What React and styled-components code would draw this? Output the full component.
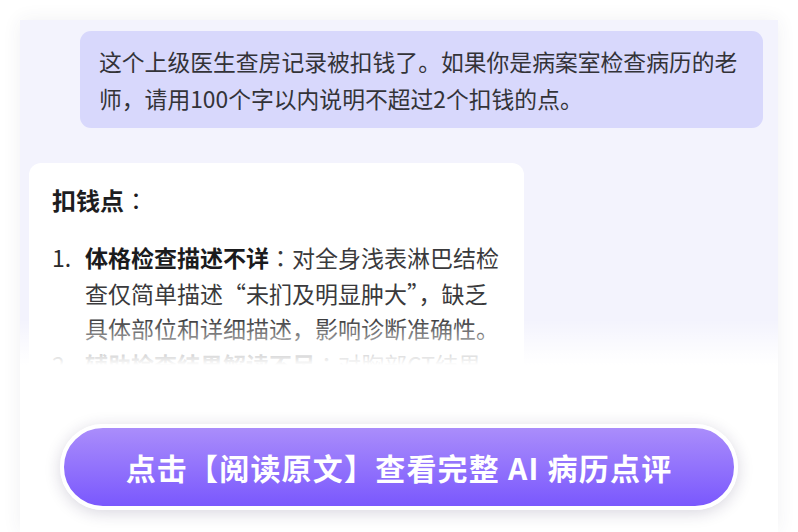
import React from "react";
import styled, { createGlobalStyle } from "styled-components";

const Global = createGlobalStyle`
  html, body { margin: 0; padding: 0; background: #ffffff; }
  body { font-family: "Noto Sans CJK SC", "Noto Sans", sans-serif; }
  * { box-sizing: border-box; }
`;

const Page = styled.div`
  width: 798px;
  height: 532px;
  padding: 20px 20px 0;
  overflow: hidden;
  background: #ffffff;
`;

const Panel = styled.div`
  width: 758px;
  height: 512px;
  display: flex;
  flex-direction: column;
  background: #ffffff;
  box-shadow: 0 0 18px rgba(60, 60, 90, 0.07);
`;

const ChatArea = styled.div`
  position: relative;
  height: 345px;
  overflow: hidden;
  background: #f3f3fd;
  padding: 11px 15px 0 9px;
  display: flex;
  flex-direction: column;
  gap: 35px;

  &::after {
    content: "";
    position: absolute;
    left: 0;
    right: 0;
    bottom: 0;
    height: 46px;
    background: linear-gradient(
      to bottom,
      rgba(255, 255, 255, 0),
      rgba(255, 255, 255, 0.8) 75%,
      #ffffff
    );
  }
`;

const UserBubble = styled.div`
  align-self: flex-end;
  width: 683px;
  background: #d8d8fc;
  border-radius: 11px;
  padding: 12px 0 11px 19px;
  font-size: 22.8px;
  line-height: 37px;
  color: #333338;
`;

const AnswerCard = styled.div`
  width: 495px;
  background: #ffffff;
  border-radius: 12px;
  padding: 19px 23px 20px;
  color: #333333;
`;

const Title = styled.div`
  font-size: 24px;
  font-weight: 700;
  line-height: 36px;
  color: #1d1d1f;
  margin-bottom: 22px;
`;

const Colon = styled.span`
  font-family: "Noto Sans CJK TC", "Noto Sans CJK SC", sans-serif;
  font-weight: 400;
`;

const List = styled.ol`
  margin: 0;
  padding: 0;
  list-style: none;
  display: flex;
  flex-direction: column;
`;

const Item = styled.li`
  display: flex;
  font-size: 23px;
  line-height: 35.5px;
  color: #3a3a3c;
`;

const Num = styled.span`
  flex: 0 0 33px;
  color: #2a2a2c;
`;

const ItemText = styled.span`
  flex: 1;
`;

const Strong = styled.b`
  font-weight: 700;
  color: #1b1b1d;
`;

const Footer = styled.div`
  flex: 1;
  background: #ffffff;
  display: flex;
  justify-content: center;
  padding-top: 59px;
`;

const CTA = styled.button`
  width: 678px;
  height: 86px;
  border: 4px solid #ffffff;
  border-radius: 43px;
  background: linear-gradient(to bottom, #aa8dfb, #7a58fd);
  box-shadow: 0 3px 16px rgba(40, 30, 80, 0.18);
  color: #ffffff;
  font-family: "Noto Sans CJK SC", "Noto Sans", sans-serif;
  font-size: 30px;
  font-weight: 700;
  letter-spacing: 1.2px;
  display: flex;
  align-items: center;
  justify-content: center;
  padding: 0;
  cursor: pointer;
`;

export default function App() {
  return (
    <>
      <Global />
      <Page>
        <Panel>
          <ChatArea>
            <UserBubble>
              这个上级医生查房记录被扣钱了。如果你是病案室检查病历的老师，请用100个字以内说明不超过2个扣钱的点。
            </UserBubble>
            <AnswerCard>
              <Title>
                扣钱点<Colon>：</Colon>
              </Title>
              <List>
                <Item>
                  <Num>1.</Num>
                  <ItemText>
                    <Strong>体格检查描述不详</Strong>
                    <Colon>：</Colon>对全身浅表淋巴结检查仅简单描述“未扪及明显肿大”，缺乏具体部位和详细描述，影响诊断准确性。
                  </ItemText>
                </Item>
                <Item>
                  <Num>2.</Num>
                  <ItemText>
                    <Strong>辅助检查结果解读不足</Strong>
                    <Colon>：</Colon>对胸部CT结果的分析不够深入，未结合临床给出进一步处理意见。
                  </ItemText>
                </Item>
              </List>
            </AnswerCard>
          </ChatArea>
          <Footer>
            <CTA>点击【阅读原文】查看完整 AI 病历点评</CTA>
          </Footer>
        </Panel>
      </Page>
    </>
  );
}
